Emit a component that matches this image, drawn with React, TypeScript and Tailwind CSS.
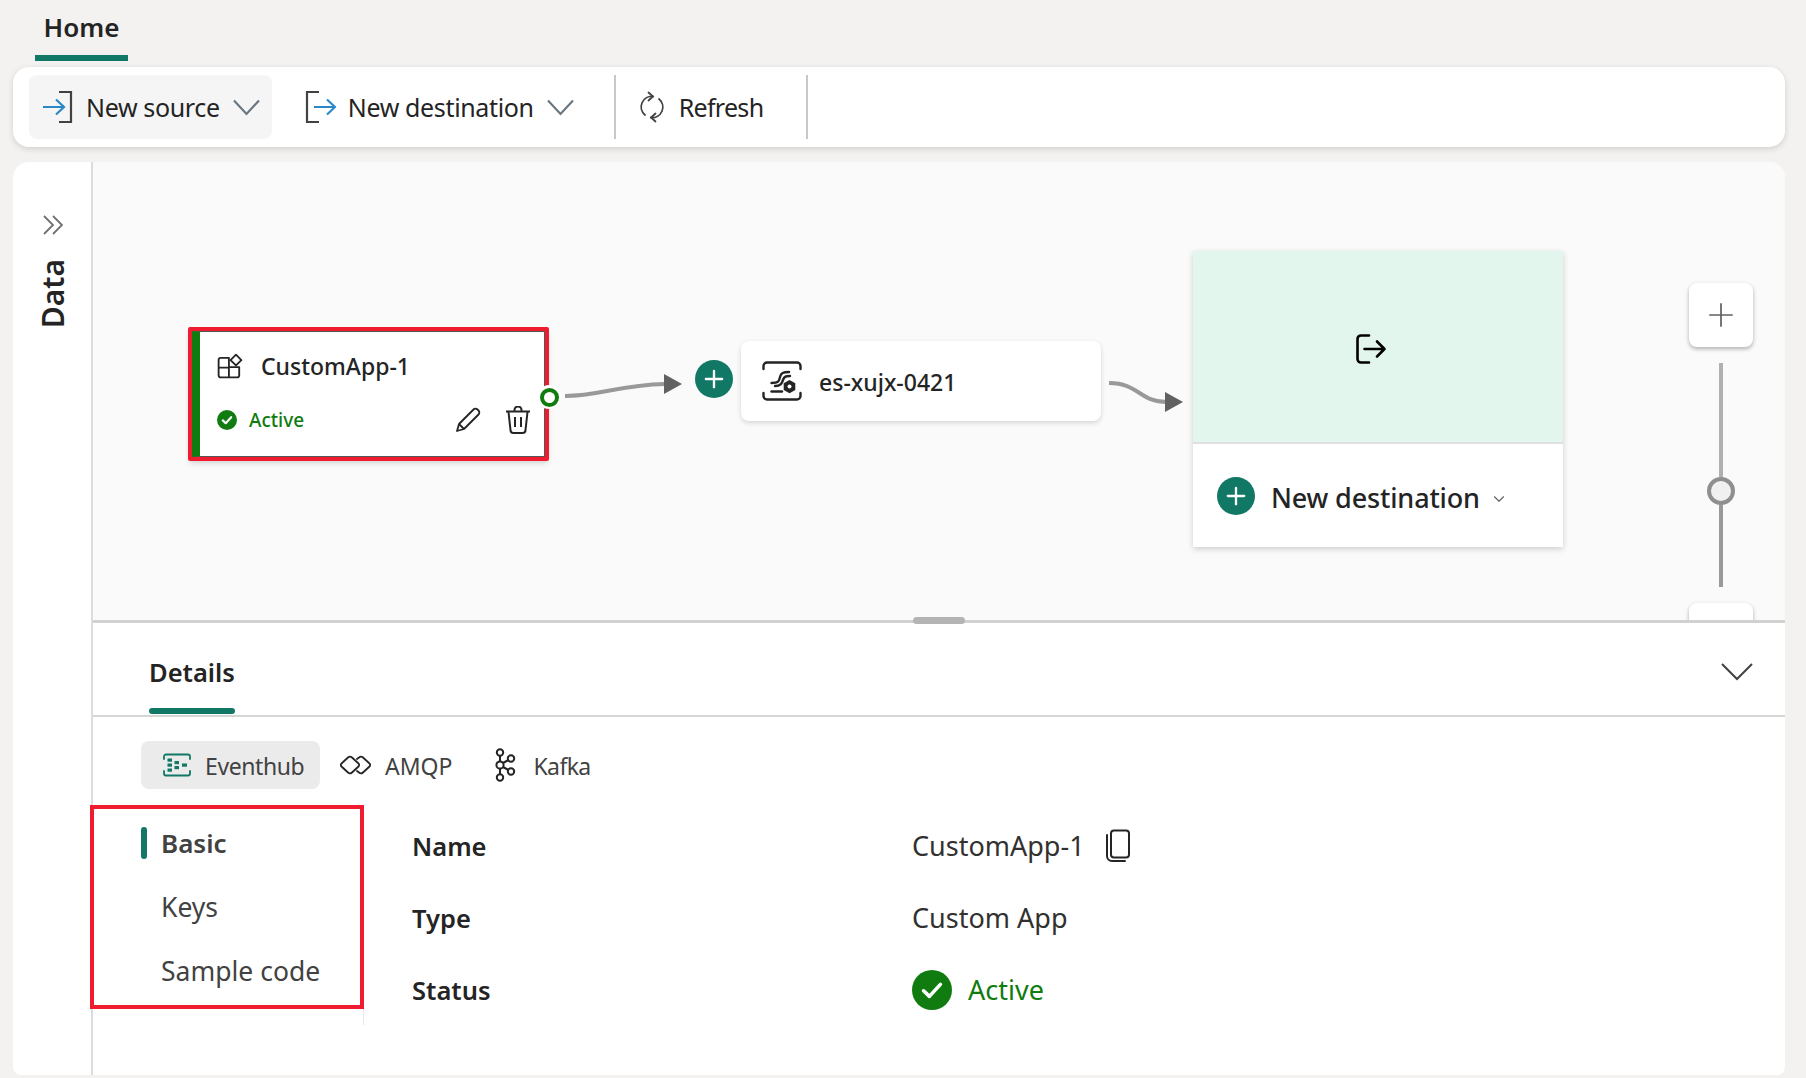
import { ChevronDown, Plus } from "lucide-react";

const ink = "text-[#242424]";

const NewSourceIcon = () => (
  <svg width="32" height="34" viewBox="0 0 32 34" fill="none">
    <path d="M17 2h12v30H17" stroke="#424242" strokeWidth="2.200" />
    <path d="M1 17h20M14 9.500l8 7.500-8 7.500" stroke="#2b88c8" strokeWidth="2.200" />
  </svg>
);

const NewDestIcon = () => (
  <svg width="32" height="34" viewBox="0 0 32 34" fill="none">
    <path d="M15 2H3v30h12" stroke="#424242" strokeWidth="2.200" />
    <path d="M10 17h20M23 9.500l8 7.500-8 7.500" stroke="#2b88c8" strokeWidth="2.200" />
  </svg>
);

const ToolbarChevron = () => (
  <svg width="27" height="17" viewBox="0 0 27 17" fill="none" stroke="#6b7780" strokeWidth="2.200" className="ml-[13px] shrink-0">
    <path d="M1 1.500l12.500 13.500L26 1.500" />
  </svg>
);

const RefreshIcon = () => (
  <svg width="28" height="32" viewBox="0 0 28 32" fill="none" stroke="#424242" strokeWidth="1.800" strokeLinecap="round">
    <path d="M15 5.500A10.500 10.500 0 0 0 7 24" />
    <path d="M21 8A10.500 10.500 0 0 1 13 26.500" />
    <path d="M10.500 1.500L15 5.500 10.500 9.500M17.500 22.500L13 26.500l4.500 4" />
  </svg>
);

const AppIcon = () => (
  <svg width="26" height="26" viewBox="0 0 24 24" fill="none" stroke="#242424" strokeWidth="1.700" strokeLinejoin="round">
    <path d="M11 4.500H3.500a2 2 0 0 0-2 2V20.500a2 2 0 0 0 2 2h15a2 2 0 0 0 2-2V13H11V4.500zM1.500 13.500H11v9" />
    <path d="M17.500 1.500l5 5-5 5-5-5z" />
  </svg>
);

const CheckCircle = ({ size, stroke }: { size: number; stroke: number }) => (
  <svg width={size} height={size} viewBox="0 0 20 20" className="shrink-0">
    <circle cx="10" cy="10" r="10" fill="#107c10" />
    <path d="M5.800 10.400l2.900 2.800 5.500-6" fill="none" stroke="#fff" strokeWidth={stroke} strokeLinecap="round" strokeLinejoin="round" />
  </svg>
);

const PencilIcon = () => (
  <svg width="26" height="26" viewBox="0 0 26 26" fill="none" stroke="#242424" strokeWidth="1.800" strokeLinejoin="round">
    <path d="M2 24l2-7L18.500 2.500a2.800 2.800 0 0 1 4 0l1 1a2.800 2.800 0 0 1 0 4L9 22z" />
    <path d="M4 17l5 5" />
  </svg>
);

const TrashIcon = () => (
  <svg width="26" height="28" viewBox="0 0 26 28" fill="none" stroke="#242424" strokeWidth="2" strokeLinejoin="round">
    <path d="M1 5.500h24M9.500 5V4a3.500 3.500 0 0 1 7 0v1" />
    <path d="M3.500 6l2 18a3 3 0 0 0 3 3h9a3 3 0 0 0 3-3l2-18" />
    <path d="M10 11v10M16 11v10" />
  </svg>
);

const StreamIcon = () => (
  <svg width="40" height="40" viewBox="0 0 40 40" fill="none" stroke="#242424" strokeWidth="2.400" strokeLinecap="round">
    <path d="M1.500 8V5a3.500 3.500 0 0 1 3.500-3.500h30A3.500 3.500 0 0 1 38.500 5v3" />
    <path d="M1.500 32v3A3.500 3.500 0 0 0 5 38.500h30a3.500 3.500 0 0 0 3.500-3.500v-3" />
    <path d="M27 11c-6 0-8 1-9 5s-1 6-8.500 6" />
    <path d="M28 15c-5 0-6 1-7 4s-2 6-8 6" />
    <path d="M9.500 30.500h10.500" />
    <path d="M27.500 19l5.800 3.300v6.600l-5.800 3.300-5.800-3.300v-6.600z" fill="#242424" stroke="none" />
    <circle cx="27.500" cy="25.600" r="2" fill="#fff" stroke="none" />
  </svg>
);

const ExitIcon = () => (
  <svg width="32" height="32" viewBox="0 0 32 32" fill="none" stroke="#000" strokeWidth="2.600" strokeLinecap="round" strokeLinejoin="round">
    <path d="M14 2.500H6A3.500 3.500 0 0 0 2.500 6v20A3.500 3.500 0 0 0 6 29.500h8" />
    <path d="M9.500 16h20M22 8.500l7.500 7.500-7.500 7.500" />
  </svg>
);

const EventhubIcon = () => (
  <svg width="28" height="24" viewBox="0 0 28 24" fill="none" stroke="#117865" strokeWidth="1.800" strokeLinecap="round">
    <path d="M1 6V3.500A2 2 0 0 1 3 1.500h22a2 2 0 0 1 2 2V6M1 18v2.500a2 2 0 0 0 2 2h22a2 2 0 0 0 2-2V18" />
    <g fill="#117865" stroke="none">
      <rect x="4.500" y="5.500" width="4.500" height="3.200" />
      <rect x="4.500" y="10.500" width="4.500" height="3.200" />
      <rect x="4.500" y="15.500" width="4.500" height="3.200" />
      <rect x="11.500" y="8" width="4.500" height="3.200" />
      <rect x="11.500" y="13" width="4.500" height="3.200" />
      <rect x="19" y="10.500" width="5" height="3.200" />
    </g>
  </svg>
);

const AmqpIcon = () => (
  <svg width="32" height="20" viewBox="0 0 32 20" fill="none" stroke="#242424" strokeWidth="1.800" strokeLinecap="round" strokeLinejoin="round">
    <path d="M8 2.500a3 3 0 0 1 4 0l6.500 6a2 2 0 0 1 0 3l-6.500 6a3 3 0 0 1-4 0l-6.500-6a2 2 0 0 1 0-3z" />
    <path d="M17 4l2-1.500a3 3 0 0 1 4 0l6.500 6a2 2 0 0 1 0 3l-6.500 6a3 3 0 0 1-4 0l-2-1.500" />
  </svg>
);

const KafkaIcon = () => (
  <svg width="24" height="34" viewBox="0 0 24 34" fill="none" stroke="#242424" strokeWidth="2">
    <circle cx="8" cy="4.500" r="3.200" />
    <circle cx="8" cy="17" r="3.600" />
    <circle cx="8" cy="29.500" r="3.200" />
    <circle cx="19" cy="10.500" r="3.200" />
    <circle cx="19" cy="23.500" r="3.200" />
    <path d="M8 8v5.500M8 20.500V26M11 15l5.500-3M11 19l5.500 3" />
  </svg>
);

const CopyIcon = () => (
  <svg width="26" height="34" viewBox="0 0 26 34" fill="none" stroke="#242424" strokeWidth="2">
    <rect x="6" y="1.500" width="18" height="27" rx="3" />
    <path d="M2 6v21a5 5 0 0 0 5 5h13" strokeLinecap="round" />
  </svg>
);

const PlusCircle = () => (
  <div className="w-[38px] h-[38px] rounded-full bg-[#117865] flex items-center justify-center">
    <Plus size={28} color="#fff" strokeWidth={2} />
  </div>
);

const ToolbarButton = ({ label, icon, active }: { label: string; icon: React.ReactNode; active?: boolean }) => (
  <div className={`h-[64px] flex items-center rounded-lg pl-[13px] pr-[12px] ${active ? "bg-[#f5f5f5]" : ""}`}>
    {icon}
    <span className={`ml-[12px] mt-[2px] text-[25px] tracking-[-0.35px] ${ink}`}>{label}</span>
    <ToolbarChevron />
  </div>
);

const Row = ({ label, children }: { label: string; children: React.ReactNode }) => (
  <div className="h-[72px] flex items-center">
    <span className={`w-[500px] text-[25.500px] font-semibold ${ink}`}>{label}</span>
    <div className="flex items-center text-[27px] text-[#323130]">{children}</div>
  </div>
);

export default function App() {
  return (
    <div className="w-[1806px] h-[1078px] overflow-hidden bg-[#f3f2f1] flex flex-col font-['Noto_Sans',sans-serif]">
      <div className="h-[67px] pl-[35px]">
        <div className="w-[93px] h-[61px] border-b-[6px] border-[#117865] flex items-center justify-center pb-[1px]">
          <span className={`text-[26px] font-semibold ${ink}`}>Home</span>
        </div>
      </div>

      <div className="ml-[13px] mr-[21px] h-[80px] bg-white rounded-2xl shadow-[0_2px_6px_rgba(0,0,0,0.14)] flex items-center pl-[16px]">
        <ToolbarButton label="New source" icon={<NewSourceIcon />} active />
        <div className="ml-[19px]">
          <ToolbarButton label="New destination" icon={<NewDestIcon />} />
        </div>
        <div className="ml-[28px] w-[2px] h-[64px] bg-[#c8c8c8]" />
        <div className="flex items-center pl-[22px] pr-[43px]">
          <RefreshIcon />
          <span className={`ml-[13px] mt-[2px] text-[25px] tracking-[-0.7px] ${ink}`}>Refresh</span>
        </div>
        <div className="w-[2px] h-[64px] bg-[#c8c8c8]" />
      </div>

      <div className="ml-[13px] mr-[21px] mt-[15px] h-[913px] bg-white rounded-t-2xl rounded-b-lg overflow-hidden flex">
        <div className="w-[80px] shrink-0 flex flex-col items-center pt-[53px] pl-[2px] border-r-[2px] border-[#dcdcdc]">
          <svg width="20" height="20" viewBox="0 0 20 20" fill="none" stroke="#707070" strokeWidth="1.800">
            <path d="M1 1l9 9-9 9M10 1l9 9-9 9" />
          </svg>
          <span className={`mt-[24px] text-[30px] font-semibold leading-[34px] [writing-mode:vertical-rl] rotate-180 ${ink}`}>Data</span>
        </div>

        <div className="flex-1 flex flex-col min-w-0">
          <div className="relative h-[461px] shrink-0 overflow-hidden bg-[#fafafa] border-b-[3px] border-[#d1d1d1]">
            {/* source node */}
            <div className="absolute left-[95px] top-[165px] w-[361px] h-[134px] border-[4px] border-[#ee1c2e] rounded-[2px] bg-white shadow-md">
              <div className="h-full border border-[#555] border-l-[8px] border-l-[#107c10] pl-[17px] pr-[13px]">
                <div className="flex items-center h-[56px] mt-[6px]">
                  <AppIcon />
                  <span className={`ml-[18px] text-[23px] font-medium ${ink}`}>CustomApp-1</span>
                </div>
                <div className="flex items-center mt-[12px]">
                  <CheckCircle size={20} stroke={2.200} />
                  <span className="ml-[12px] text-[19px] font-medium text-[#107c10]">Active</span>
                  <div className="ml-auto flex items-center gap-[24px]">
                    <PencilIcon />
                    <TrashIcon />
                  </div>
                </div>
              </div>
            </div>

            {/* output port */}
            <div className="absolute left-[444px] top-[223px] w-[24px] h-[24px] rounded-full bg-white flex items-center justify-center">
              <div className="w-[19px] h-[19px] rounded-full border-[4px] border-[#107c10] bg-white" />
            </div>

            {/* connectors */}
            <svg className="absolute left-[472px] top-[205px]" width="120" height="40" viewBox="0 0 120 40" fill="none">
              <path d="M0 29c34 0 54-11 100-12" stroke="#999" strokeWidth="4" />
              <path d="M99 7l18 10-18 10z" fill="#616161" />
            </svg>
            <svg className="absolute left-[1014px] top-[215px]" width="90" height="40" viewBox="0 0 90 40" fill="none">
              <path d="M2 6c30 0 30 19 58 19" stroke="#999" strokeWidth="4" />
              <path d="M58 15l18 10-18 10z" fill="#616161" />
            </svg>

            <div className="absolute left-[602px] top-[198px]">
              <PlusCircle />
            </div>

            {/* stream node */}
            <div className="absolute left-[648px] top-[179px] w-[360px] h-[80px] bg-white rounded-lg shadow-[0_2px_5px_rgba(0,0,0,0.15)] flex items-center pl-[21px]">
              <StreamIcon />
              <span className={`ml-[17px] mt-[2px] text-[23px] font-medium ${ink}`}>es-xujx-0421</span>
            </div>

            {/* destination node */}
            <div className="absolute left-[1100px] top-[89px] w-[370px] h-[296px] bg-white shadow-[0_2px_6px_rgba(0,0,0,0.18)] flex flex-col">
              <div className="h-[193px] bg-[#e2f6ed] border-b-[2px] border-[#e0e0e0] flex items-center justify-center pr-[14px] pt-[4px]">
                <ExitIcon />
              </div>
              <div className="flex-1 flex items-center pl-[24px]">
                <PlusCircle />
                <span className={`ml-[16px] mt-[6px] text-[27px] font-medium tracking-[-0.15px] ${ink}`}>New destination</span>
                <ChevronDown size={18} color="#616161" strokeWidth={1.500} className="ml-[10px] mt-[6px]" />
              </div>
            </div>

            {/* zoom control */}
            <div className="absolute left-[1596px] top-[121px] w-[64px] h-[64px] bg-white rounded-lg shadow-[0_2px_4px_rgba(0,0,0,0.3)] flex items-center justify-center">
              <Plus size={38} color="#616161" strokeWidth={1.100} />
            </div>
            <div className="absolute left-[1626px] top-[201px] w-[4px] h-[114px] bg-[#b0b0b0]" />
            <div className="absolute left-[1626px] top-[343px] w-[4px] h-[82px] bg-[#999]" />
            <div className="absolute left-[1614px] top-[315px] w-[28px] h-[28px] rounded-full bg-[#f0f0f0] border-[4px] border-[#8f8f8f]" />
            <div className="absolute left-[1596px] top-[441px] w-[64px] h-[64px] bg-white rounded-lg shadow-[0_2px_4px_rgba(0,0,0,0.3)]" />
          </div>

          <div className="relative flex-1 flex flex-col">
            <div className="absolute left-[820px] -top-[6px] w-[52px] h-[7px] rounded-full bg-[#b4b4b4]" />

            <div className="h-[94px] shrink-0 border-b-[2px] border-[#d6d6d6] flex items-end justify-between pl-[56px] pr-[32px]">
              <div className="h-full flex flex-col justify-end">
                <span className={`text-[25.500px] font-semibold leading-[34px] mb-[19px] ${ink}`}>Details</span>
                <div className="h-[6px] mb-[1px] rounded-full bg-[#117865]" />
              </div>
              <svg className="mb-[33px]" width="32" height="20" viewBox="0 0 32 20" fill="none" stroke="#424242" strokeWidth="2">
                <path d="M1 2l15 15L31 2" />
              </svg>
            </div>

            <div className="flex items-center pl-[48px] pt-[24px] text-[23px] text-[#424242]">
              <div className="h-[48px] w-[179px] bg-[#ebebeb] rounded-lg flex items-center pl-[22px]">
                <EventhubIcon />
                <span className="ml-[14px] mt-[2px] tracking-[-0.4px]">Eventhub</span>
              </div>
              <div className="flex items-center ml-[20px]">
                <AmqpIcon />
                <span className="ml-[13px] mt-[2px]">AMQP</span>
              </div>
              <div className="flex items-center ml-[40px]">
                <KafkaIcon />
                <span className="ml-[17px] mt-[2px] tracking-[-0.6px]">Kafka</span>
              </div>
            </div>

            <div className="flex mt-[16px]">
              <div className="w-[271px] h-[220px] shrink-0 border-r border-[#e8e8e8]">
                <div className="h-[204px] w-[274px] -ml-[3px] border-[4px] border-[#ee1c2e] pl-[67px] pt-[6px] text-[26.500px] text-[#424242]">
                  <div className="relative h-[64px] flex items-center font-semibold text-[26px]">
                    <div className="absolute -left-[20px] top-[12px] w-[6px] h-[32px] rounded-full bg-[#117865]" />
                    <span className="-mt-[7px]">Basic</span>
                  </div>
                  <div className="h-[64px] flex items-center">
                    <span className="-mt-[7px]">Keys</span>
                  </div>
                  <div className="h-[64px] flex items-center">
                    <span className="-mt-[7px]">Sample code</span>
                  </div>
                </div>
              </div>
              <div className="pl-[48px] pt-[5px]">
                <Row label="Name">
                  <span>CustomApp-1</span>
                  <span className="ml-[20px]"><CopyIcon /></span>
                </Row>
                <Row label="Type">
                  <span>Custom App</span>
                </Row>
                <Row label="Status">
                  <CheckCircle size={40} stroke={1.800} />
                  <span className="ml-[16px] text-[#107c10]">Active</span>
                </Row>
              </div>
            </div>
          </div>
        </div>
      </div>
    </div>
  );
}
